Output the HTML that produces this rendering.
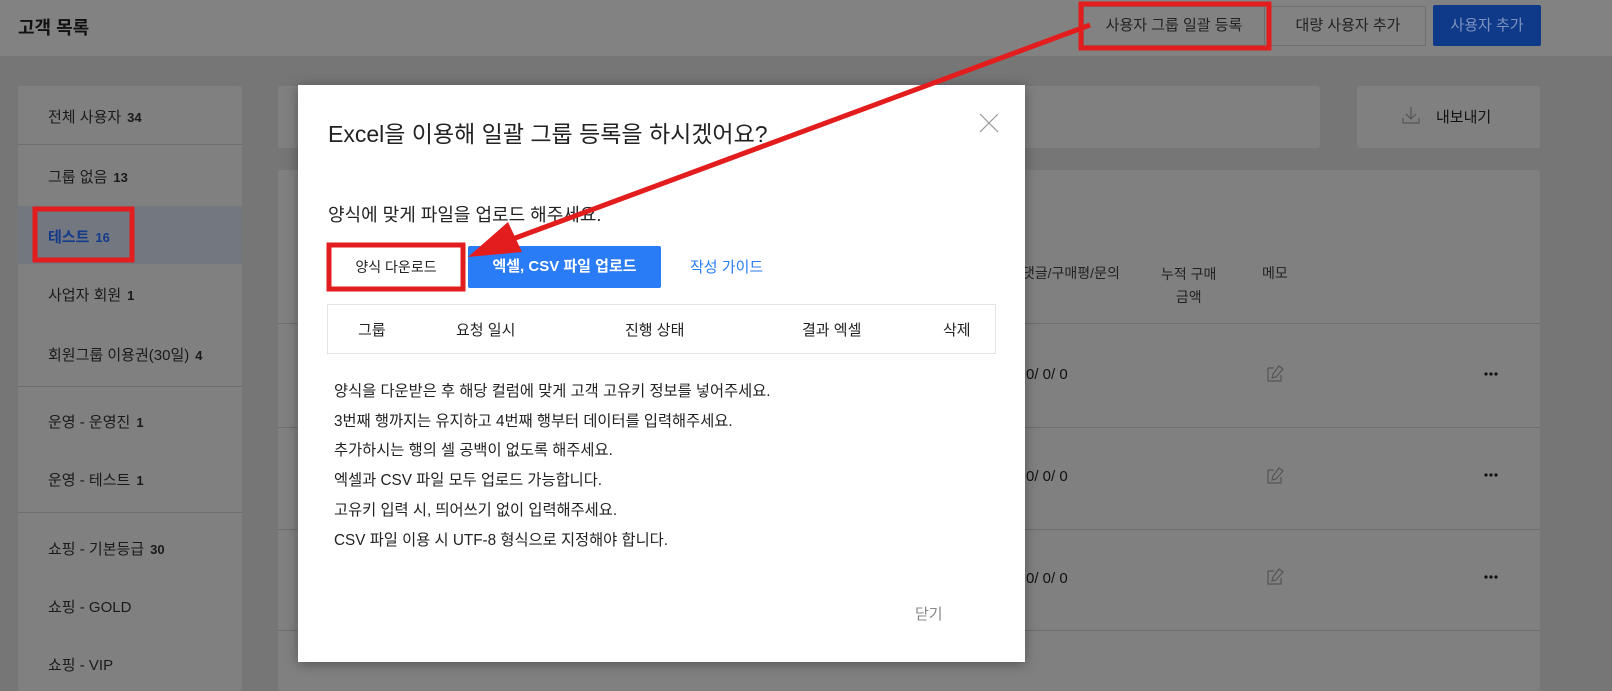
<!DOCTYPE html>
<html><head><meta charset="utf-8"><style>
*{margin:0;padding:0;box-sizing:border-box}
body{width:1612px;height:691px;overflow:hidden;background:#767676;font-family:"Liberation Sans","Noto Sans CJK KR",sans-serif;position:relative;color:#111}
.a{position:absolute}
.top{left:0;top:0;width:1612px;height:56px;background:#828282}
.card{background:#808080;border-radius:3px}
.side div.it{position:absolute;left:30px;font-size:15px;color:#1a1a1a}
.side b{font-weight:700;font-size:13px;margin-left:6px}
.ln{position:absolute;height:1px;background:#6e6e6e}
.modal{left:298px;top:85px;width:727px;height:577px;background:#fff;box-shadow:0 2px 12px rgba(0,0,0,.35)}
.li{position:absolute;left:36px;font-size:15.3px;color:#222}
</style></head><body>
<div class="a top"></div>
<div class="a" style="left:18px;top:14px;font-size:18px;font-weight:700;color:#111">고객 목록</div>
<div class="a" style="left:1083px;top:6px;width:182px;height:40px;border:1px solid #6f6f6f;font-size:15px;line-height:38px;text-align:center;color:#222">사용자 그룹 일괄 등록</div>
<div class="a" style="left:1270px;top:6px;width:156px;height:40px;border:1px solid #6f6f6f;font-size:15px;line-height:38px;text-align:center;color:#222">대량 사용자 추가</div>
<div class="a" style="left:1433px;top:5px;width:108px;height:41px;background:#0f3a8a;border-radius:2px;font-size:15px;line-height:41px;text-align:center;color:#7f93bd">사용자 추가</div>

<div class="a card side" style="left:18px;top:86px;width:224px;height:605px">
<div class="a" style="left:0;top:120px;width:224px;height:58px;background:#737780"></div>
<div class="it" style="top:20px">전체 사용자<b>34</b></div>
<div class="ln" style="left:0;top:58px;width:224px"></div>
<div class="it" style="top:80px">그룹 없음<b>13</b></div>
<div class="it" style="top:140px;color:#143a8a;font-weight:700">테스트<b>16</b></div>
<div class="it" style="top:198px">사업자 회원<b>1</b></div>
<div class="it" style="top:258px">회원그룹 이용권(30일)<b>4</b></div>
<div class="ln" style="left:0;top:300px;width:224px"></div>
<div class="it" style="top:325px">운영 - 운영진<b>1</b></div>
<div class="it" style="top:383px">운영 - 테스트<b>1</b></div>
<div class="ln" style="left:0;top:426px;width:224px"></div>
<div class="it" style="top:452px">쇼핑 - 기본등급<b>30</b></div>
<div class="it" style="top:510px">쇼핑 - GOLD</div>
<div class="it" style="top:568px">쇼핑 - VIP</div>
</div>

<div class="a card" style="left:278px;top:86px;width:1042px;height:62px"></div>
<div class="a card" style="left:1357px;top:86px;width:183px;height:62px;font-size:15px;color:#111"><span class="a" style="left:79px;top:20px">내보내기</span>
<svg class="a" style="left:45px;top:20px" width="18" height="18"><path d="M9 1V13M4 8L9 13 14 8M1 12V17H17V12" fill="none" stroke="#555" stroke-width="1.2"/></svg></div>
<div class="a card" style="left:278px;top:170px;width:1262px;height:521px">
<div class="a" style="left:740px;top:93px;font-size:14px;color:#222">/댓글/구매평/문의</div>
<div class="a" style="left:883px;top:93px;font-size:14px;color:#222;text-align:center;line-height:23px">누적 구매<br>금액</div>
<div class="a" style="left:984px;top:93px;font-size:14px;color:#222">메모</div>
<div class="ln" style="left:0;top:153px;width:1262px"></div>
<div class="ln" style="left:0;top:257px;width:1262px"></div>
<div class="ln" style="left:0;top:359px;width:1262px"></div>
<div class="ln" style="left:0;top:460px;width:1262px"></div>
<div class="a" style="left:748px;top:196px;font-size:15px">0/ 0/ 0</div>
<div class="a" style="left:748px;top:298px;font-size:15px">0/ 0/ 0</div>
<div class="a" style="left:748px;top:400px;font-size:15px">0/ 0/ 0</div>
</div>
<svg class="a" style="left:0;top:0" width="1612" height="691">
<g fill="#111"><circle cx="1486" cy="374" r="1.6"/><circle cx="1491" cy="374" r="1.6"/><circle cx="1496" cy="374" r="1.6"/>
<circle cx="1486" cy="475" r="1.6"/><circle cx="1491" cy="475" r="1.6"/><circle cx="1496" cy="475" r="1.6"/>
<circle cx="1486" cy="577" r="1.6"/><circle cx="1491" cy="577" r="1.6"/><circle cx="1496" cy="577" r="1.6"/></g>
<g fill="none" stroke="#555" stroke-width="1.2">
<path d="M1268 368h6M1268 368v13h13v-6M1279 366l4 3-7 8-4 1 1-4z"/>
<path d="M1268 470h6M1268 470v13h13v-6M1279 468l4 3-7 8-4 1 1-4z"/>
<path d="M1268 571h6M1268 571v13h13v-6M1279 569l4 3-7 8-4 1 1-4z"/>
</g></svg>

<div class="a modal">
<div class="a" style="left:30px;top:30px;font-size:23px;color:#222">Excel을 이용해 일괄 그룹 등록을 하시겠어요?</div>
<svg class="a" style="left:681px;top:28px" width="20" height="20"><path d="M1 1L19 19M19 1L1 19" stroke="#999" stroke-width="1.2"/></svg>
<div class="a" style="left:30px;top:116px;font-size:18px;color:#222">양식에 맞게 파일을 업로드 해주세요.</div>
<div class="a" style="left:32px;top:161px;width:132px;height:42px;border:1px solid #ddd;font-size:14px;line-height:40px;text-align:center;color:#222">양식 다운로드</div>
<div class="a" style="left:170px;top:161px;width:193px;height:42px;background:#2a7cf6;border-radius:2px;font-size:15px;font-weight:700;line-height:42px;text-align:center;color:#fff">엑셀, CSV 파일 업로드</div>
<div class="a" style="left:392px;top:171px;font-size:15px;color:#2a7cf6">작성 가이드</div>
<div class="a" style="left:29px;top:219px;width:669px;height:50px;border:1px solid #e3e3e3;font-size:15px;color:#222">
<span class="a" style="left:30px;top:14px">그룹</span><span class="a" style="left:128px;top:14px">요청 일시</span><span class="a" style="left:297px;top:14px">진행 상태</span><span class="a" style="left:474px;top:14px">결과 엑셀</span><span class="a" style="left:615px;top:14px">삭제</span></div>
<div class="li" style="top:294px">양식을 다운받은 후 해당 컬럼에 맞게 고객 고유키 정보를 넣어주세요.</div>
<div class="li" style="top:324px">3번째 행까지는 유지하고 4번째 행부터 데이터를 입력해주세요.</div>
<div class="li" style="top:353px">추가하시는 행의 셀 공백이 없도록 해주세요.</div>
<div class="li" style="top:383px">엑셀과 CSV 파일 모두 업로드 가능합니다.</div>
<div class="li" style="top:413px">고유키 입력 시, 띄어쓰기 없이 입력해주세요.</div>
<div class="li" style="top:443px">CSV 파일 이용 시 UTF-8 형식으로 지정해야 합니다.</div>
<div class="a" style="left:617px;top:518px;font-size:15px;color:#888">닫기</div>
</div>

<svg class="a" style="left:0;top:0" width="1612" height="691">
<g fill="none" stroke="#e31d1d" stroke-width="5">
<rect x="1081" y="4" width="188" height="44"/>
<rect x="35" y="209" width="97" height="51"/>
<rect x="329" y="245" width="134" height="44"/>
<path d="M1090 25L510 240"/>
</g>
<path d="M468 257L508 222L522 252Z" fill="#e31d1d"/>
</svg>
</body></html>
